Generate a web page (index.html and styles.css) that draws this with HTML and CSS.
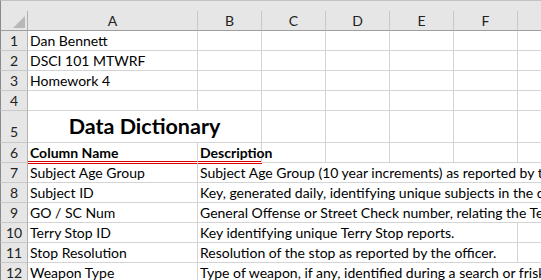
FILE: index.html
```html
<!DOCTYPE html>
<html lang="en">
<head>
    <meta charset="UTF-8">
    <title>Data Dictionary - Homework 4</title>
    <link rel="stylesheet" href="styles.css">
</head>
<body>
    <div class="topbar"></div>
    <div class="sheet">
        <div class="corner"><span class="select-all"></span></div>
        <div class="col">A</div>
        <div class="col">B</div>
        <div class="col">C</div>
        <div class="col">D</div>
        <div class="col">E</div>
        <div class="col">F</div>
        <div class="col"></div>

        <div class="num">1</div>
        <div>Dan Bennett</div>
        <div></div><div></div><div></div><div></div><div></div><div></div>

        <div class="num">2</div>
        <div>DSCI 101 MTWRF</div>
        <div></div><div></div><div></div><div></div><div></div><div></div>

        <div class="num">3</div>
        <div>Homework 4</div>
        <div></div><div></div><div></div><div></div><div></div><div></div>

        <div class="num">4</div>
        <div></div>
        <div></div><div></div><div></div><div></div><div></div><div></div>

        <div class="num tall">5</div>
        <div class="title">Data Dictionary</div>
        <div></div><div></div><div></div><div></div><div></div>

        <div class="num">6</div>
        <div class="head">Column Name</div>
        <div class="head">Description</div>
        <div></div><div></div><div></div><div></div><div></div>

        <div class="num">7</div>
        <div>Subject Age Group</div>
        <div class="spill">Subject Age Group (10 year increments) as reported by the officer.</div>

        <div class="num">8</div>
        <div>Subject ID</div>
        <div class="spill">Key, generated daily, identifying unique subjects in the dataset.</div>

        <div class="num">9</div>
        <div>GO / SC Num</div>
        <div class="spill">General Offense or Street Check number, relating the Terry Stop to the parent report.</div>

        <div class="num">10</div>
        <div>Terry Stop ID</div>
        <div class="spill-short">Key identifying unique Terry Stop reports.</div>
        <div></div>

        <div class="num">11</div>
        <div>Stop Resolution</div>
        <div class="spill-short">Resolution of the stop as reported by the officer.</div>
        <div></div>

        <div class="num">12</div>
        <div>Weapon Type</div>
        <div class="spill">Type of weapon, if any, identified during a search or frisk of the subject.</div>
    </div>
</body>
</html>
```

FILE: styles.css
```css
body { margin: 0; width: 541px; height: 280px; overflow: hidden; background: #fff; font-family: Lato, "Open Sans", sans-serif; }
.topbar { height: 11px; box-sizing: border-box; background: #e6e6e6; border-top: 1px solid #c2c2c2; border-left: 1px solid #8a8a8a; }
.sheet { display: grid; grid-template-columns: 28px 170px repeat(6, 64px); grid-template-rows: repeat(5, 20px) 32px repeat(7, 20px); font-size: 14px; color: #000; }
.sheet > div { box-sizing: border-box; border-right: 1px solid #d4d4d4; border-bottom: 1px solid #d4d4d4; padding-left: 2px; line-height: 19px; white-space: nowrap; }
.corner { display: flex; justify-content: flex-end; align-items: flex-end; padding: 0 2px 2px 0; background: #e6e6e6; border-left: 1px solid #8a8a8a; }
.sheet > .corner { border-right-color: #b1b1b1; border-bottom-color: #9e9e9e; }
.select-all { width: 0; height: 0; border-left: 12px solid transparent; border-bottom: 12px solid #b8b8b8; }
.sheet > .col { background: #e6e6e6; border-right-color: #c8c8c8; border-bottom-color: #9e9e9e; text-align: center; padding-left: 0; color: #222; }
.sheet > .num { background: #e6e6e6; border-left: 1px solid #8a8a8a; border-right-color: #b1b1b1; border-bottom-color: #c8c8c8; text-align: center; padding-left: 0; color: #222; }
.sheet > .tall { display: flex; align-items: flex-end; justify-content: center; padding-bottom: 1px; }
.sheet > .title { grid-column: span 2; display: flex; align-items: flex-end; justify-content: center; padding: 0 0 4px; font-size: 21.5px; font-weight: 700; line-height: 24px; }
.sheet > .head { font-weight: 700; border-bottom-color: #fff; box-shadow: inset 0 -1px 0 #e00000, 0 1px 0 #e00000; }
.spill { grid-column: span 6; }
.spill-short { grid-column: span 5; }
```
